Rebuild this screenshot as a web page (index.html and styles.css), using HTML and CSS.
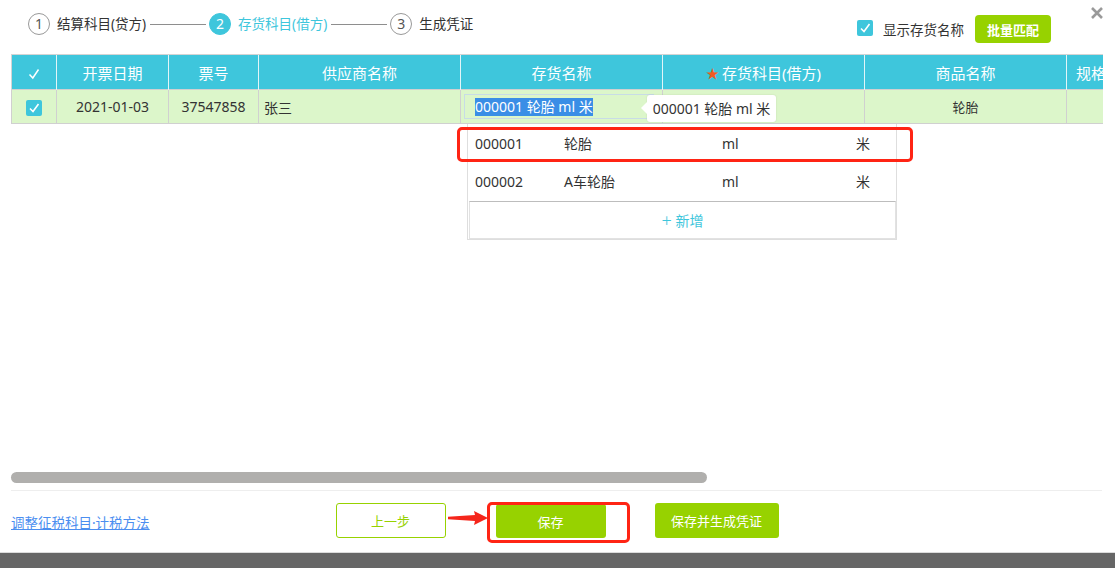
FILE: index.html
```html
<!DOCTYPE html>
<html>
<head>
  <meta charset="utf-8">
  <title>存货科目匹配</title>
  <link rel="stylesheet" href="styles.css">
</head>
<body>
  <div class="dialog">
    <!-- шаги + панель -->
    <div class="topbar">
      <div class="steps">
        <span class="step-num">1</span>
        <span class="step-label">结算科目(贷方)</span>
        <span class="step-line"></span>
        <span class="step-num active">2</span>
        <span class="step-label active">存货科目(借方)</span>
        <span class="step-line"></span>
        <span class="step-num">3</span>
        <span class="step-label">生成凭证</span>
      </div>
      <div class="tools">
        <span class="check"><svg viewBox="0 0 16 16" width="16" height="16"><path d="M4 8.5 L7 11.5 L12.5 4" fill="none" stroke="#fff" stroke-width="1.6"/></svg></span>
        <span class="tools-label">显示存货名称</span>
        <button class="btn btn-green btn-small">批量匹配</button>
      </div>
      <span class="close"><svg viewBox="0 0 12 12" width="12" height="12"><path d="M1 1 L11 11 M11 1 L1 11" stroke="#9a9a9a" stroke-width="2.6"/></svg></span>
    </div>

    <div class="grid">
      <table>
        <colgroup>
          <col style="width:45px"><col style="width:112px"><col style="width:90px">
          <col style="width:202px"><col style="width:202px"><col style="width:202px">
          <col style="width:202px"><col style="width:202px">
        </colgroup>
        <thead>
          <tr>
            <th><svg viewBox="0 0 16 16" width="16" height="16"><path d="M3.5 8.5 L6.8 12 L12.5 3.5" fill="none" stroke="#fff" stroke-width="1.5"/></svg></th>
            <th>开票日期</th>
            <th>票号</th>
            <th>供应商名称</th>
            <th>存货名称</th>
            <th><span class="star">★</span>存货科目(借方)</th>
            <th>商品名称</th>
            <th class="left">规格</th>
          </tr>
        </thead>
        <tbody>
          <tr>
            <td><span class="check"><svg viewBox="0 0 16 16" width="16" height="16"><path d="M4 8.5 L7 11.5 L12.5 4" fill="none" stroke="#fff" stroke-width="1.6"/></svg></span></td>
            <td>2021-01-03</td>
            <td>37547858</td>
            <td class="left">张三</td>
            <td class="edit-cell">
              <div class="edit-box"><span class="sel">000001 轮胎 ml 米</span></div>
              <div class="tip">000001 轮胎 ml 米</div>
              <div class="dropdown">
                <div class="dd-row"><span class="c1">000001</span><span class="c2">轮胎</span><span class="c3">ml</span><span>米</span></div>
                <div class="dd-row"><span class="c1">000002</span><span class="c2">A车轮胎</span><span class="c3">ml</span><span>米</span></div>
                <div class="dd-add"><span class="plus">+</span> 新增</div>
                <div class="mark-row"></div>
              </div>
            </td>
            <td></td>
            <td class="small">轮胎</td>
            <td></td>
          </tr>
        </tbody>
      </table>
    </div>

    <div class="hscroll"></div>
    <div class="divider"></div>

    <div class="actions">
      <a class="link" href="#">调整征税科目·计税方法</a>
      <div class="buttons">
        <button class="btn btn-outline">上一步</button>
        <span class="save-wrap">
          <svg class="arrow" viewBox="0 0 40 16" width="40" height="16"><path d="M0 6.8 L27 5 L26 1 L40 8 L26 15 L27 11 L0 9.2 Z" fill="#f5261b"/></svg>
          <button class="btn btn-green">保存</button>
          <span class="ring"></span>
        </span>
        <button class="btn btn-green btn-wide">保存并生成凭证</button>
      </div>
      <div></div>
    </div>
  </div>
  <div class="shade"></div>
</body>
</html>
```

FILE: styles.css
```css
/* общий вид */
body {
  margin: 0;
  font-family: "Noto Sans", "Noto Sans CJK SC", sans-serif;
  font-size: 13px;
  color: #333;
  background: #fff;
  overflow: hidden;
}
.dialog {
  position: relative;
  height: 553px;
  padding: 0 12px 0 11px;
  box-sizing: border-box;
  border-bottom: 1px solid #dcdcdc;
}
.shade {
  height: 15px;
  background: #666;
}

/* шаги */
.topbar {
  height: 54px;
  display: flex;
  align-items: flex-start;
}
.steps {
  display: flex;
  align-items: center;
  padding: 13px 0 0 17px;
}
.step-num {
  width: 20px;
  height: 20px;
  border: 1px solid #999;
  border-radius: 50%;
  display: flex;
  align-items: center;
  justify-content: center;
  font-size: 14px;
  line-height: 1;
  color: #555;
}
.step-num.active {
  background: #3ec6dc;
  border-color: #3ec6dc;
  color: #fff;
}
.step-label {
  margin-left: 7px;
  font-size: 13.5px;
  line-height: 22px;
  color: #333;
}
.step-label.active {
  color: #3ec6dc;
}
.step-line {
  width: 56px;
  margin: 0 3px 0 4px;
  border-top: 1px solid #8e8e8e;
}

.tools {
  margin-left: auto;
  display: flex;
  align-items: center;
  padding: 15px 52px 0 0;
}
.check {
  display: inline-flex;
  width: 16px;
  height: 16px;
  background: #3ec6dc;
  border-radius: 2px;
  vertical-align: middle;
}
.tools .check {
  margin-top: -3px;
}
.tools-label {
  margin-left: 10px;
  font-size: 13.5px;
}
.close {
  position: absolute;
  top: 7px;
  right: 12px;
  line-height: 0;
}

/* кнопки */
.btn {
  font-family: inherit;
  font-size: 13px;
  height: 35px;
  width: 110px;
  border-radius: 3px;
  cursor: pointer;
  padding: 0;
}
.btn-green {
  background: #97d200;
  border: none;
  color: #fff;
}
.btn-small {
  width: 76px;
  height: 28px;
  margin-left: 11px;
  font-weight: bold;
  border-radius: 4px;
}
.btn-wide {
  width: 124px;
}
.btn-outline {
  background: #fff;
  border: 1px solid #97d200;
  color: #97d200;
}

/* таблица */
.grid {
  height: 412px;
  width: 1092px;
  overflow: hidden;
}
table {
  border-collapse: collapse;
  table-layout: fixed;
  width: 1257px;
}
th {
  height: 34px;
  background: #3ec6dc;
  color: #fff;
  font-weight: normal;
  font-size: 15px;
  padding: 0;
  border-top: 1px solid #d4d4d4;
  border-left: 1px solid #e2f5f8;
  text-align: center;
  white-space: nowrap;
}
th:first-child {
  border-left: 1px solid #d4d4d4;
}
th svg, td .check {
  vertical-align: middle;
}
th.left {
  text-align: left;
  padding-left: 9px;
}
.star {
  color: #f15a22;
  font-size: 13px;
  margin-right: 3px;
  position: relative;
  top: -1px;
}
td {
  height: 33px;
  padding: 0;
  background: #dcf6ca;
  border: 1px solid #d0d0d0;
  text-align: center;
  font-size: 14px;
}
td.left {
  text-align: left;
  padding-left: 5px;
}
td.small {
  font-size: 13px;
}

/* редактируемая ячейка */
.edit-cell {
  position: relative;
  text-align: left;
}
.edit-box {
  margin-left: 3px;
  width: 190px;
  height: 25px;
  border: 1px solid #c8dce6;
  box-sizing: border-box;
  padding-left: 10px;
  display: flex;
  align-items: center;
}
.sel {
  background: #3a8ee6;
  color: #fff;
  line-height: 18px;
}
.tip {
  position: absolute;
  left: 186px;
  top: 5px;
  width: 129px;
  height: 27px;
  background: #fff;
  border-radius: 3px;
  line-height: 27px;
  text-align: center;
  box-shadow: 0 0 2px rgba(0, 0, 0, 0.12);
  z-index: 2;
}
.tip::before {
  content: "";
  position: absolute;
  left: -11px;
  top: 7px;
  border: 6px solid transparent;
  border-right: 6px solid #fff;
  border-left-width: 5px;
}
.dropdown {
  position: absolute;
  left: 6px;
  top: 34px;
  width: 428px;
  background: #fff;
  border: 1px solid #dedede;
  border-top: none;
  z-index: 3;
}
.dd-row {
  height: 38px;
  display: flex;
  align-items: center;
  padding-left: 7px;
  font-size: 14px;
}
.dd-row .c1 { width: 89px; }
.dd-row .c2 { width: 158px; }
.dd-row .c3 { width: 134px; }
.dd-add {
  margin: 1px 0 0 1px;
  height: 36px;
  border: 1px solid #e2e2e2;
  border-top: 1px solid #bdbdbd;
  line-height: 36px;
  text-align: center;
  color: #3ec6dc;
  font-size: 14px;
}
.plus {
  font-size: 18px;
  font-weight: 300;
  vertical-align: -1px;
}
.mark-row {
  position: absolute;
  left: -11px;
  top: 3px;
  width: 450px;
  height: 29px;
  border: 3px solid #ff2414;
  border-radius: 5px;
}

/* низ */
.hscroll {
  margin-top: 6px;
  width: 696px;
  height: 11px;
  background: #b0afad;
  border-radius: 6px;
}
.divider {
  margin-top: 7px;
  width: 1091px;
  border-top: 1px solid #eeeeee;
}
.actions {
  display: grid;
  grid-template-columns: 1fr auto 1fr;
  align-items: center;
  padding-top: 12px;
}
.link {
  font-size: 13.5px;
  color: #4b8ef0;
  text-decoration: underline;
  margin-top: 3px;
}
.buttons {
  display: flex;
  align-items: center;
}
.save-wrap {
  position: relative;
  margin: 0 49px 0 50px;
  display: inline-flex;
}
.save-wrap .btn {
  height: 34px;
  margin-top: 1px;
}
.ring {
  position: absolute;
  left: -9px;
  right: -24px;
  top: -1px;
  bottom: -5px;
  border: 3px solid #ff2414;
  border-radius: 5px;
}
.arrow {
  position: absolute;
  left: -48px;
  top: 7px;
}
```
